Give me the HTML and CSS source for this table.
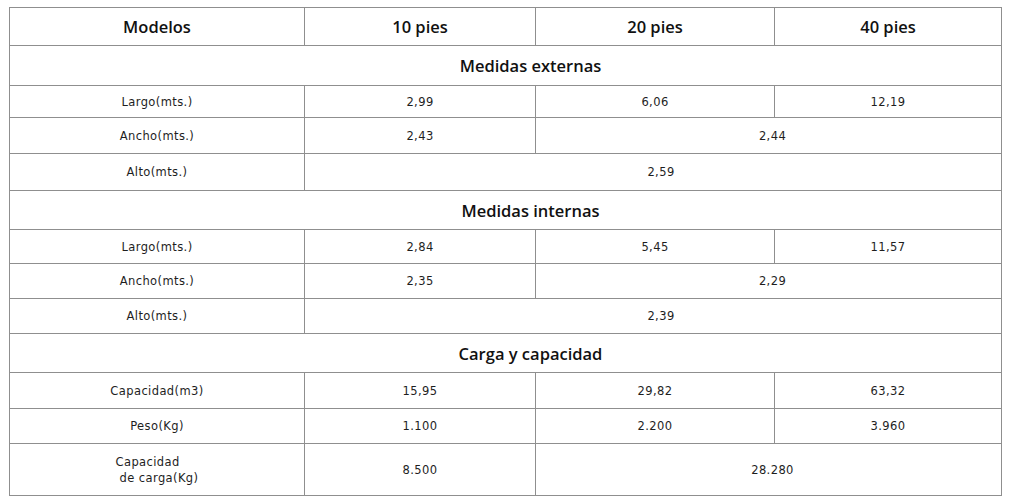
FILE: index.html
```html
<!DOCTYPE html>
<html lang="es">
<head>
<meta charset="utf-8">
<title>Contenedores</title>
<link rel="stylesheet" href="styles.css">
</head>
<body>
<div class="wrap">
<table class="specs">
  <colgroup>
    <col class="c1"><col class="c2"><col class="c3"><col class="c4">
  </colgroup>
  <tr class="r-head">
    <th>Modelos</th><th>10 pies</th><th>20 pies</th><th>40 pies</th>
  </tr>
  <tr class="r-sec"><th colspan="4" class="sec">Medidas externas</th></tr>
  <tr class="r32"><td>Largo(mts.)</td><td>2,99</td><td>6,06</td><td>12,19</td></tr>
  <tr class="r36"><td>Ancho(mts.)</td><td>2,43</td><td colspan="2" class="span2">2,44</td></tr>
  <tr class="r37"><td>Alto(mts.)</td><td colspan="3" class="span3">2,59</td></tr>
  <tr class="r-sec2"><th colspan="4" class="sec">Medidas internas</th></tr>
  <tr class="r34"><td>Largo(mts.)</td><td>2,84</td><td>5,45</td><td>11,57</td></tr>
  <tr class="r35"><td>Ancho(mts.)</td><td>2,35</td><td colspan="2" class="span2">2,29</td></tr>
  <tr class="r35"><td>Alto(mts.)</td><td colspan="3" class="span3">2,39</td></tr>
  <tr class="r-sec2"><th colspan="4" class="sec">Carga y capacidad</th></tr>
  <tr class="r36"><td>Capacidad(m3)</td><td>15,95</td><td>29,82</td><td>63,32</td></tr>
  <tr class="r35"><td>Peso(Kg)</td><td>1.100</td><td>2.200</td><td>3.960</td></tr>
  <tr class="r52"><td><span class="two">Capacidad<br>&nbsp;de carga(Kg)</span></td><td>8.500</td><td colspan="2" class="span2">28.280</td></tr>
</table>
</div>
</body>
</html>
```

FILE: styles.css
```css
html, body {
  margin: 0;
  padding: 0;
  background: #ffffff;
}
.wrap {
  padding: 7px 0 0 9px;
}
.specs {
  border-collapse: collapse;
  table-layout: fixed;
  width: 992px;
  color: #1e1e1e;
}
.c1 { width: 295px; }
.c2 { width: 231px; }
.c3 { width: 239px; }
.c4 { width: 227px; }
.specs th, .specs td {
  border: 1px solid #8f8f8f;
  text-align: center;
  vertical-align: middle;
  padding: 0;
}
.specs th {
  font-family: "Open Sans", "Liberation Sans", sans-serif;
  font-size: 16.5px;
  font-weight: 600;
  color: #111;
}
.specs th.sec { padding-left: 50px; }
.specs td {
  font-family: "DejaVu Sans", "Liberation Sans", sans-serif;
  font-size: 11.5px;
  letter-spacing: 0.4px;
  font-weight: 400;
}
.r-head { height: 38px; }
.r-sec { height: 40px; }
.r-sec2 { height: 39px; }
.r32 { height: 32px; }
.r34 { height: 34px; }
.r35 { height: 35px; }
.r36 { height: 36px; }
.r37 { height: 37px; }
.r52 { height: 52px; }
.specs td.span2 { padding-left: 8px; }
.specs td.span3 { padding-left: 16px; }
.two {
  display: inline-block;
  text-align: left;
  line-height: 16px;
}
```
